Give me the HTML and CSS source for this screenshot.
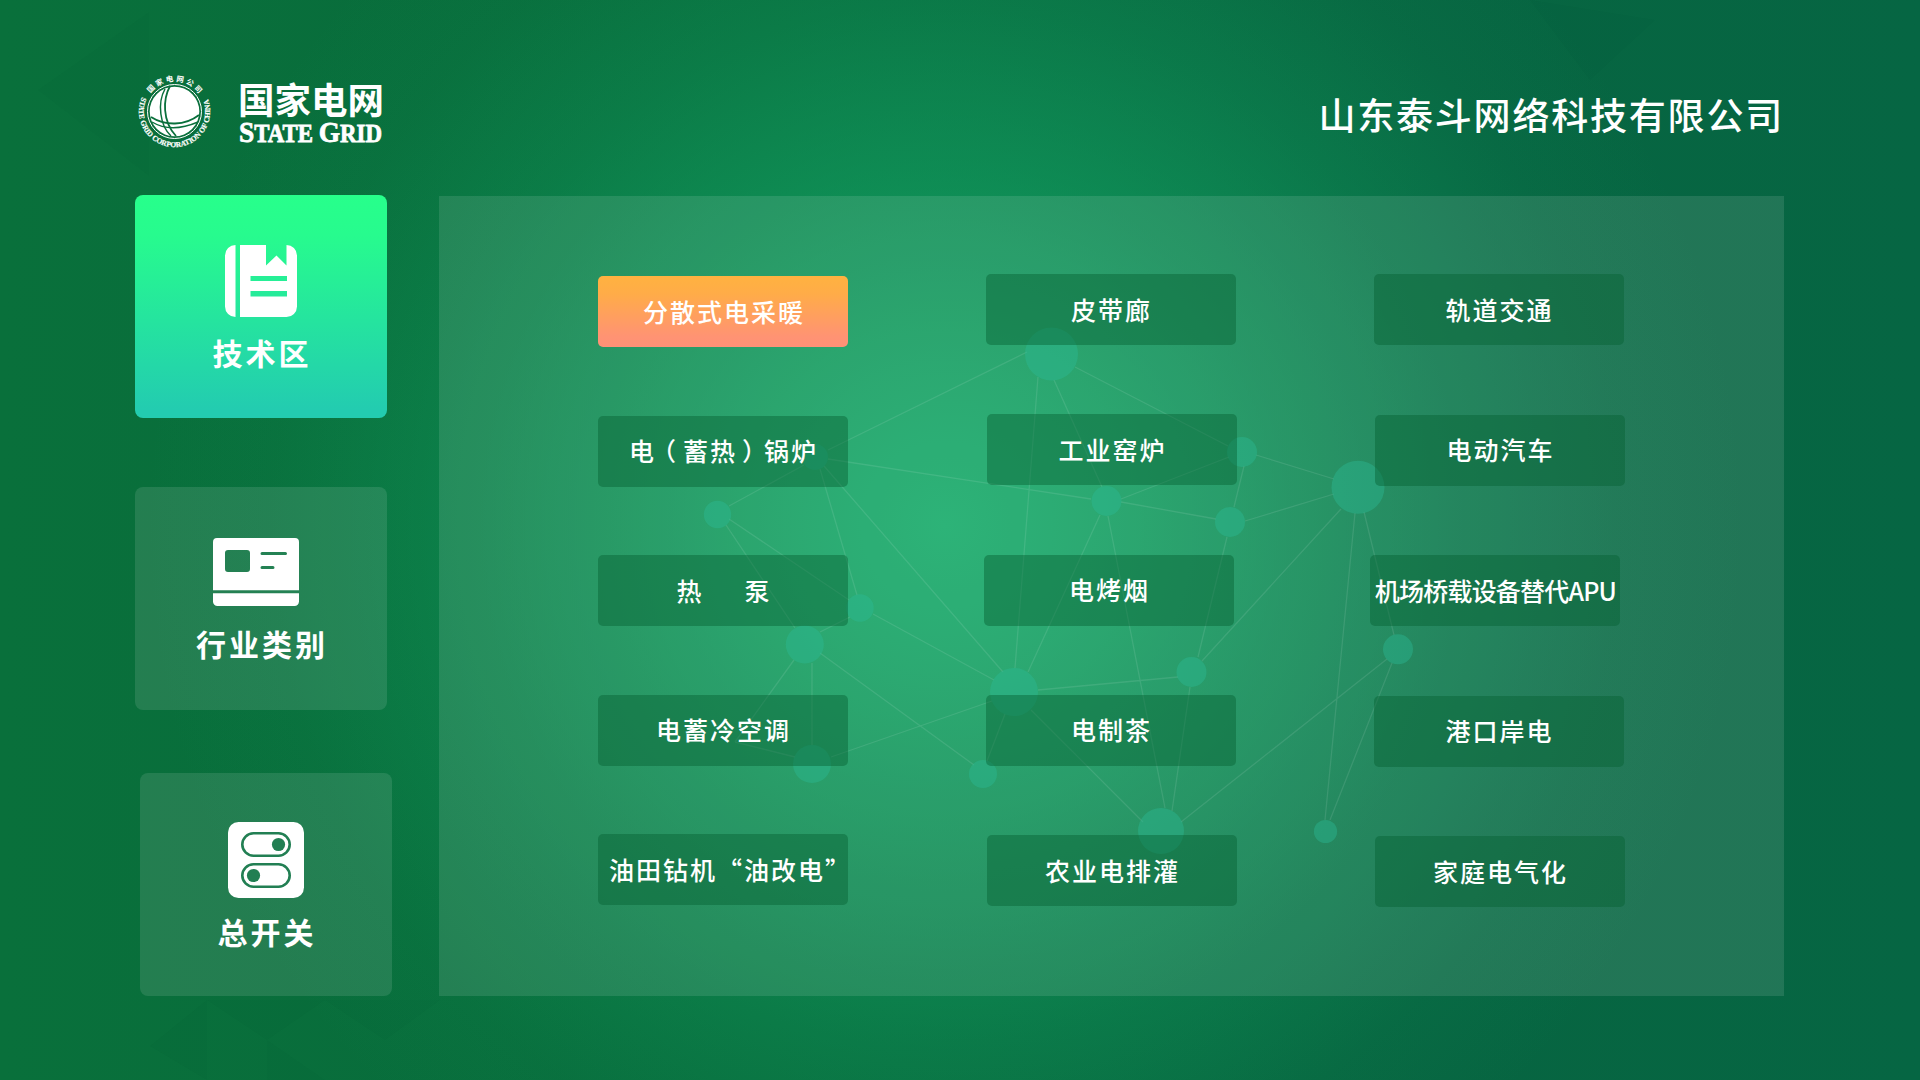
FILE: index.html
```html
<!DOCTYPE html>
<html lang="zh-CN">
<head>
<meta charset="utf-8">
<title>国家电网</title>
<link rel="stylesheet" href="styles.css">
</head>
<body>
<div class="screen">
  <svg class="facets" width="1920" height="1080" viewBox="0 0 1920 1080" aria-hidden="true">
    <path d="M149 12V176L38 90Z"/>
    <path d="M267 1040L325 1080H267Z"/>
    <path d="M207 1000L150 1046L207 1080ZM207 1000L267 1040L325 1000"/>
    <path d="M325 1000L385 1040L440 1000M385 1040V1080M1530 0L1655 20L1590 80"/>
  </svg>

  <header class="header">
    <div class="brand">
      <svg class="emblem" width="80" height="80" viewBox="0 0 80 80">
        <defs>
          <path id="arc-top" d="M16.500 21.400A30 30 0 0 1 66 23.700"/>
          <path id="arc-bottom" d="M8 25A35.600 35.600 0 1 0 73 25"/>
        </defs>
        <circle cx="40.5" cy="39.5" r="27" fill="none" stroke="#fff" stroke-width="1"/>
        <circle cx="40.5" cy="39.5" r="24.800" fill="#fff"/>
        <g fill="none" stroke="#0a703c">
          <path d="M36 14C29 27 28 49 42 64" stroke-width="1.8"/>
          <path d="M31 17C23 31 26 54 37 64" stroke-width="1.5"/>
          <path d="M17 45C31 54 51 54 65 43" stroke-width="1.8"/>
          <path d="M18 50C33 59 50 56 64 50" stroke-width="1.4"/>
        </g>
        <text class="emblem-cn"><textPath href="#arc-top" textLength="56">国家电网公司</textPath></text>
        <text class="emblem-en"><textPath href="#arc-bottom" textLength="139">STATE GRID CORPORATION OF CHINA</textPath></text>
      </svg>
      <div class="wordmark">
        <div class="wordmark-cn">国家电网</div>
        <svg class="wordmark-en" width="150" height="28" viewBox="0 0 150 28">
          <text x="3" y="22" textLength="143" lengthAdjust="spacingAndGlyphs"><tspan class="cap">S</tspan>TATE <tspan class="cap">G</tspan>RID</text>
        </svg>
      </div>
    </div>
    <h1 class="company">山东泰斗网络科技有限公司</h1>
  </header>

  <main class="main">
    <nav class="side">
      <a class="card card-tech">
        <svg width="72" height="72" viewBox="0 0 72 72">
          <path fill="#fff" d="M10.500 0V72A10.500 10.500 0 0 1 0 61.500V10.500A10.500 10.500 0 0 1 10.500 0Z"/>
          <path fill="#fff" fill-rule="evenodd" d="M15 0H41V20.500L51.500 10.500L61.500 20.500V0A10.500 10.500 0 0 1 72 10.500V61.500A10.500 10.500 0 0 1 61.500 72H15ZM25.500 31V36H62V31ZM25.500 46V51.500H62V46Z"/>
        </svg>
        <span class="card-label">技术区</span>
      </a>
      <a class="card card-industry">
        <svg width="86" height="68" viewBox="0 0 86 68">
          <path fill="#fff" fill-rule="evenodd" d="M4 0H82A4 4 0 0 1 86 4V52.300H0V4A4 4 0 0 1 4 0ZM15 12A3 3 0 0 0 12 15V31A3 3 0 0 0 15 34H34A3 3 0 0 0 37 31V15A3 3 0 0 0 34 12ZM49 14A1.500 1.500 0 0 0 49 17H72.500A1.500 1.500 0 0 0 72.500 14ZM49 28A1.500 1.500 0 0 0 49 31H60A1.500 1.500 0 0 0 60 28Z"/>
          <path fill="#fff" d="M0 55.300H86V63.500A4.500 4.500 0 0 1 81.500 68H4.500A4.500 4.500 0 0 1 0 63.500Z"/>
        </svg>
        <span class="card-label">行业类别</span>
      </a>
      <a class="card card-switch">
        <svg width="76" height="76" viewBox="0 0 76 76">
          <rect width="76" height="76" rx="10.500" fill="#fff"/>
          <g fill="none" stroke="#227f53" stroke-width="2.600">
            <rect x="14.300" y="11.300" width="47.400" height="22.400" rx="11.200"/>
            <rect x="14.300" y="42.300" width="47.400" height="22.400" rx="11.200"/>
          </g>
          <circle cx="50.500" cy="22.500" r="6.600" fill="#227f53"/>
          <circle cx="25.500" cy="53.500" r="6.600" fill="#227f53"/>
        </svg>
        <span class="card-label">总开关</span>
      </a>
    </nav>

    <section class="panel">
      <svg class="network" width="1345" height="800" viewBox="439 196 1345 800" aria-hidden="true">
        <path class="links" d="M1027 352L828 450M1054 380L1102 487M1038 377L1015 668M1075 367L1228 446M828 459L1091 499M804 465L729 506M820 469L857 595M824 466L1003 672M726 525L795 628M729 519L849 600M850 617L820 632M873 614L994 680M794 660L735 742M812 663V745M820 653L974 765M831 757L992 701M735 742L795 757M1100 515L1028 672M1038 690L1178 677M1005 714L987 761M1031 710L1143 822M1121 499L1229 457M1121 502L1216 519M1108 516L1165 808M1256 455L1334 479M1244 466L1234 507M1245 521L1334 494M1227 537L1198 657M1341 509L1202 661M1355 513L1325 820M1364 512L1394 635M1190 687L1172 811M1181 822L1387 659M1392 663L1330 820"/>
        <g class="nodes">
          <circle cx="1051.500" cy="354" r="26.500"/><circle cx="815" cy="457" r="13"/>
          <circle cx="717.500" cy="514.500" r="13.700"/><circle cx="860" cy="608" r="13.700"/>
          <circle cx="804.800" cy="644.500" r="19"/><circle cx="1106.500" cy="501" r="15"/>
          <circle cx="1242" cy="452" r="15"/><circle cx="1230" cy="522" r="15"/>
          <circle cx="1358" cy="487.300" r="26.500"/><circle cx="1014" cy="692" r="24"/>
          <circle cx="1191.500" cy="672" r="15"/><circle cx="812" cy="764" r="19"/>
          <circle cx="983" cy="774" r="14"/><circle cx="1161" cy="831" r="23"/>
          <circle cx="1398" cy="649.300" r="15"/><circle cx="1325.500" cy="831.500" r="11.600"/>
        </g>
      </svg>
      <div class="grid">
        <div class="column">
          <a class="tile active">分散式电采暖</a>
          <a class="tile">电<span class="paren-open">（</span>蓄热<span class="paren-close">）</span>锅炉</a>
          <a class="tile spread">热 泵</a>
          <a class="tile">电蓄冷空调</a>
          <a class="tile quoted">油田钻机“油改电”</a>
        </div>
        <div class="column second">
          <a class="tile">皮带廊</a>
          <a class="tile out">工业窑炉</a>
          <a class="tile in">电烤烟</a>
          <a class="tile">电制茶</a>
          <a class="tile out">农业电排灌</a>
        </div>
        <div class="column third">
          <a class="tile">轨道交通</a>
          <a class="tile out">电动汽车</a>
          <a class="tile tight">机场桥载设备替代APU</a>
          <a class="tile">港口岸电</a>
          <a class="tile out">家庭电气化</a>
        </div>
      </div>
    </section>
  </main>
</div>
</body>
</html>
```
FILE: styles.css
```css
* { box-sizing: border-box; }

body {
  margin: 0;
  color: #fff;
  font-family: "Noto Sans CJK SC", "Noto Sans", sans-serif;
}

.screen {
  position: relative;
  width: 1920px;
  height: 1080px;
  overflow: hidden;
  background:
    radial-gradient(circle 800px at 945px 525px,
      rgba(20, 170, 104, 1) 0,
      rgba(20, 170, 104, .82) 20%,
      rgba(20, 170, 104, .55) 42%,
      rgba(20, 170, 104, .26) 65%,
      rgba(20, 170, 104, .07) 84%,
      rgba(20, 170, 104, 0) 100%),
    linear-gradient(90deg, #09703b 0, #086b3c 40%, #076541 75%, #066643 100%);
}

.facets {
  position: absolute;
  inset: 0;
  fill: rgba(0, 60, 40, .025);
}

.header {
  position: relative;
  display: flex;
  justify-content: space-between;
  height: 195px;
  padding: 72px 136px 0 134px;
}

.brand { display: flex; }

.emblem { display: block; overflow: visible; }
.emblem text { fill: #fff; }
.emblem-cn { font-size: 7.5px; font-weight: 700; }
.emblem-en {
  font: 700 7.500px "Liberation Serif", serif;
  stroke: #fff;
  stroke-width: .2px;
}

.wordmark { margin-left: 22px; }

.wordmark-cn {
  height: 48px;
  padding-left: 2px;
  font-size: 36.500px;
  font-weight: 700;
  line-height: 54px;
  letter-spacing: 0;
}

.wordmark-en {
  display: block;
  overflow: visible;
  fill: #fff;
  stroke: #fff;
  stroke-width: .8px;
  font: 700 25px "Liberation Serif", serif;
}
.wordmark-en .cap { font-size: 30px; }

.company {
  margin: 14px 0 0;
  font-size: 37px;
  font-weight: 500;
  line-height: 56px;
  letter-spacing: 1.800px;
}

.main {
  position: relative;
  display: flex;
  padding-left: 135px;
}

.side {
  display: flex;
  flex-direction: column;
  width: 304px;
}

.card {
  display: flex;
  flex-direction: column;
  align-items: center;
  width: 252px;
  height: 223px;
  border-radius: 8px;
  background: rgba(255, 255, 255, .11);
}
.card svg { flex: none; }

.card-tech {
  padding-top: 50px;
  gap: 15px;
  background: linear-gradient(#27ff8b 0, #27fb8e 18%, #23ccb0 96%);
}

.card-industry {
  margin-top: 69px;
  padding-top: 51px;
  gap: 17px;
}
.card-industry svg { margin-right: 10px; }

.card-switch {
  margin: 63px 0 0 5px;
  padding-top: 49px;
  gap: 13px;
}

.card-label {
  padding-left: 2px;
  font-size: 30px;
  font-weight: 700;
  line-height: 40px;
  letter-spacing: 3px;
}

.panel {
  position: relative;
  width: 1345px;
  height: 800px;
  margin-top: 1px;
  background: rgba(255, 255, 255, .11);
}

.network {
  position: absolute;
  inset: 0;
}
.links {
  fill: none;
  stroke: rgba(255, 255, 255, .1);
  stroke-width: 1.3;
}
.nodes { fill: rgba(43, 186, 150, .41); }

.grid {
  position: relative;
  display: flex;
  gap: 138px;
  padding: 80px 0 0 159px;
}

.column {
  display: grid;
  grid-template-rows: repeat(5, 71px);
  row-gap: 68.600px;
  width: 250px;
}
.second {
  margin-top: -2px;
  row-gap: 69.300px;
}
.third {
  margin-top: -2px;
  row-gap: 69.500px;
}

.tile {
  display: flex;
  align-items: center;
  justify-content: center;
  width: 250px;
  padding: 0 0 2px 1px;
  border-radius: 5px;
  background: rgba(6, 98, 52, .45);
  font-size: 25px;
  font-weight: 500;
  line-height: 36px;
  letter-spacing: 2px;
  white-space: nowrap;
}
.active { background: linear-gradient(#ffb240 0, #ffac48 25%, #ff9373 85%, #ff9177 100%); }
.paren-open { margin: 0 5px 0 -5px; }
.paren-close { margin: 0 -5px 0 5px; }
.spread { word-spacing: 33.400px; }
.spread,
.active { padding-left: 2px; }
.quoted {
  justify-content: flex-start;
  padding-left: 11px;
}
.out { margin-left: 1px; }
.in { margin-left: -2px; }
.tight {
  margin-left: -4px;
  letter-spacing: -.8px;
}
```
